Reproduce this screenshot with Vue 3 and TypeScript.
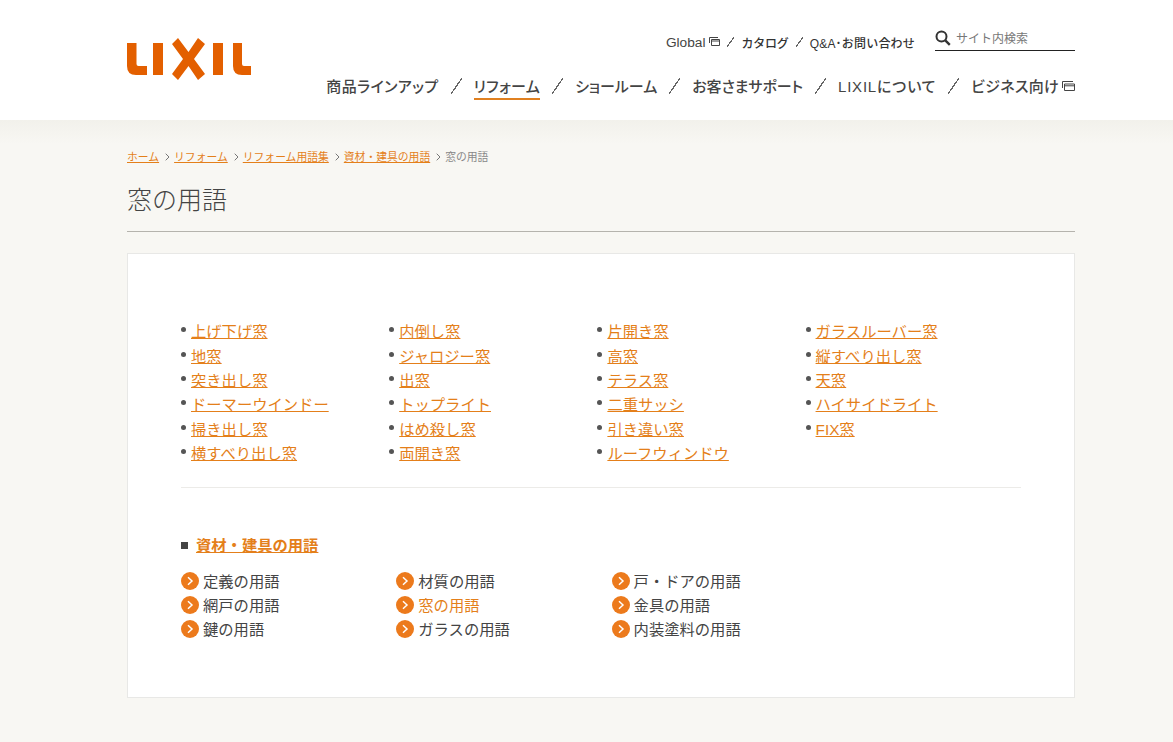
<script setup lang="ts">
const mainNav = ["商品ラインアップ", "リフォーム", "ショールーム", "お客さまサポート", "LIXILについて"];
const crumbs = ["ホーム", "リフォーム", "リフォーム用語集", "資材・建具の用語"];
const terms = [
  "上げ下げ窓", "内倒し窓", "片開き窓", "ガラスルーバー窓",
  "地窓", "ジャロジー窓", "高窓", "縦すべり出し窓",
  "突き出し窓", "出窓", "テラス窓", "天窓",
  "ドーマーウインドー", "トップライト", "二重サッシ", "ハイサイドライト",
  "掃き出し窓", "はめ殺し窓", "引き違い窓", "FIX窓",
  "横すべり出し窓", "両開き窓", "ルーフウィンドウ",
];
const related = [
  "定義の用語", "材質の用語", "戸・ドアの用語",
  "網戸の用語", "窓の用語", "金具の用語",
  "鍵の用語", "ガラスの用語", "内装塗料の用語",
];
</script>

<template>
  <div class="page">
    <header class="header">
      <div class="header-inner">
        <a class="logo" href="#" aria-label="LIXIL">
          <svg width="125" height="42" viewBox="0 0 125 42">
            <g fill="#e35f00">
              <path d="M0 5h9.500v21q0 2 2 2H20v9H9q-9 0-9-9z" />
              <rect x="26" y="5" width="10" height="32" />
              <path d="M51 0l10.500 14L71 0l7 6-11 15 11 15-7 6-9.500-14L51 42l-6-6 11-15L45 6z" />
              <rect x="86" y="5" width="10" height="32" />
              <path d="M106 5h9v21q0 2 2 2h7v9h-9q-9 0-9-9z" />
            </g>
          </svg>
        </a>
        <div class="header-right">
          <div class="utility">
            <nav class="util-nav">
              <a href="#" class="util-link">Global<svg class="win small" viewBox="0 0 11 9"><path d="M.5 6V.5H9M2.500 2.500h8v6h-8zM2.500 4h8" /></svg></a>
              <span class="slash small-slash"></span>
              <a href="#" class="util-link strong">カタログ</a>
              <span class="slash small-slash"></span>
              <a href="#" class="util-link strong qa">Q&amp;A･お問い合わせ</a>
            </nav>
            <div class="search">
              <svg width="16" height="16" viewBox="0 0 16 16"><circle cx="6.500" cy="6.500" r="5" fill="none" stroke="#333" stroke-width="2" /><path d="M10.300 10.300l4.500 4.500" stroke="#333" stroke-width="2.400" /></svg>
              <span>サイト内検索</span>
            </div>
          </div>
          <nav class="main-nav">
            <template v-for="item in mainNav" :key="item">
              <a
                href="#"
                class="main-link"
                :class="{
                  active: item === 'リフォーム',
                  first: item === '商品ラインアップ',
                  tight: item === 'ショールーム',
                  tighter: item === 'お客さまサポート',
                  wide: item === 'LIXILについて',
                }"
              >{{ item }}</a>
              <span class="slash"></span>
            </template>
            <a href="#" class="main-link">ビジネス向け<svg class="win" viewBox="0 0 13 10"><path d="M.5 7V.5H11M2.500 3h10v6.500h-10zM2.500 4.800h10" /></svg></a>
          </nav>
        </div>
      </div>
    </header>

    <main class="main">
      <div class="breadcrumb">
        <template v-for="c in crumbs" :key="c">
          <a href="#">{{ c }}</a>
          <svg class="crumb-sep" viewBox="0 0 5 8"><path d="M.7.7l3.300 3.300-3.300 3.300" /></svg>
        </template>
        <span class="current">窓の用語</span>
      </div>
      <h1 class="title">窓の用語</h1>

      <section class="panel">
        <ul class="terms">
          <li v-for="t in terms" :key="t"><a href="#">{{ t }}</a></li>
        </ul>
        <hr class="divider" />
        <h2 class="sub-title"><i></i><a href="#">資材・建具の用語</a></h2>
        <ul class="related">
          <li v-for="r in related" :key="r">
            <svg class="arrow" width="18" height="18" viewBox="0 0 18 18"><circle cx="9" cy="9" r="9" fill="#ec7a1c" /><path d="M7 5.200l4 3.800-4 3.800" fill="none" stroke="#fff" stroke-width="1.500" /></svg>
            <a href="#" :class="{ current: r === '窓の用語' }">{{ r }}</a>
          </li>
        </ul>
      </section>
    </main>
  </div>
</template>

<style>
html, body {
  margin: 0;
  background: #f8f7f3;
}
</style>

<style scoped>
.page {
  height: 742px;
  overflow: hidden;
  font-family: "Liberation Sans", "Noto Sans CJK JP", sans-serif;
  color: #444;
  background: linear-gradient(#f2f1eb, #f8f7f3 24px) 0 120px no-repeat #f8f7f3;
}
a { text-decoration: none; color: inherit; }
ul { list-style: none; margin: 0; padding: 0; }
.header {
  height: 120px;
  background: #fff;
}
.header-inner {
  width: 948px;
  height: 120px;
  margin-left: 127px;
  display: flex;
  justify-content: space-between;
}
.logo { display: block; margin-top: 38px; height: 42px; }
.logo svg { display: block; }
.header-right {
  display: flex;
  flex-direction: column;
  align-items: flex-end;
}
.utility {
  display: flex;
  align-items: flex-start;
  margin-top: 26px;
}
.util-nav {
  display: flex;
  align-items: center;
  height: 20px;
  margin-top: 6px;
  font-size: 13.700px;
  color: #444;
}
.util-link { display: flex; align-items: center; white-space: nowrap; }
.util-link.strong { font-size: 12px; font-weight: 500; color: #333; letter-spacing: -.2px; }
.util-link.qa { letter-spacing: .2px; }
.win {
  width: 13px;
  height: 10px;
  margin-left: 3px;
  fill: none;
  stroke: #444;
  stroke-width: 1;
}
.win.small { width: 11px; height: 9px; margin-left: 4px; margin-bottom: 2px; }
.slash {
  display: block;
  width: 11px;
  height: 16px;
  margin: 0 12px;
  background: linear-gradient(to bottom right, transparent calc(50% - .6px), #666 calc(50% - .6px), #666 calc(50% + .6px), transparent calc(50% + .6px));
}
.small-slash { width: 7px; height: 10px; margin: 0 7px; }
.search {
  display: flex;
  align-items: center;
  gap: 5px;
  box-sizing: border-box;
  width: 140px;
  height: 25px;
  margin-left: 20px;
  padding-bottom: 1px;
  border-bottom: 1px solid #222;
  font-size: 12px;
  color: #777;
}
.main-nav {
  display: flex;
  align-items: flex-start;
  margin-top: 23px;
}
.main-link {
  display: flex;
  align-items: center;
  height: 25px;
  box-sizing: border-box;
  padding-bottom: 4px;
  font-size: 15px;
  font-weight: 500;
  font-feature-settings: "palt";
  letter-spacing: .3px;
  color: #444;
  white-space: nowrap;
}
.main-link.first { letter-spacing: .4px; }
.main-link.tight { letter-spacing: 0; }
.main-link.tighter { letter-spacing: -.1px; }
.main-link.wide { letter-spacing: .8px; }
.main-link.active { border-bottom: 2px solid #e08020; padding-bottom: 2px; }
.main-nav .slash { margin-top: 3px; }
.main {
  width: 948px;
  margin-left: 127px;
}
.breadcrumb {
  display: flex;
  align-items: center;
  height: 18px;
  margin-top: 27px;
  font-size: 10.800px;
  color: #e47f1a;
}
.breadcrumb a { text-decoration: underline; }
.crumb-sep {
  width: 5px;
  height: 8px;
  margin: 1px 4px 0 6px;
  fill: none;
  stroke: #777;
  stroke-width: 1;
}
.breadcrumb .current { color: #888; }
.title {
  box-sizing: border-box;
  height: 55px;
  margin: 12px 0 21px;
  padding-top: 5px;
  border-bottom: 1px solid #b5b3ad;
  font-size: 25px;
  line-height: 36px;
  font-weight: 300;
  color: #444;
}
.panel {
  box-sizing: border-box;
  height: 445px;
  padding: 66.200px 53px 0;
  background: #fff;
  border: 1px solid #e8e8e6;
}
.terms {
  display: grid;
  grid-template-columns: repeat(4, 208.200px);
  grid-auto-rows: 24.400px;
  font-size: 15.300px;
  line-height: 24.400px;
}
.terms li {
  position: relative;
  padding-left: 10px;
}
.terms li::before {
  content: "";
  position: absolute;
  left: 0;
  top: 7px;
  width: 5px;
  height: 5px;
  border-radius: 50%;
  background: #555;
}
.terms a { color: #e47f1a; text-decoration: underline; white-space: nowrap; }
.divider {
  height: 1px;
  margin: 20.400px 0 0;
  border: 0;
  background: #ecebe8;
}
.sub-title {
  display: flex;
  align-items: center;
  gap: 8px;
  height: 24px;
  margin: 44px 0 0;
  font-size: 15.300px;
  font-weight: 700;
}
.sub-title i {
  display: block;
  width: 7px;
  height: 7px;
  margin-top: 3px;
  background: #444;
}
.sub-title a { color: #e47f1a; text-decoration: underline; }
.related {
  display: grid;
  grid-template-columns: repeat(3, 215.300px);
  grid-auto-rows: 24px;
  margin-top: 13.600px;
  font-size: 15.300px;
  line-height: 24px;
}
.related li { display: flex; align-items: center; gap: 4px; }
.arrow { flex: none; margin-top: -1px; }
.related a.current { color: #e47f1a; }
</style>
